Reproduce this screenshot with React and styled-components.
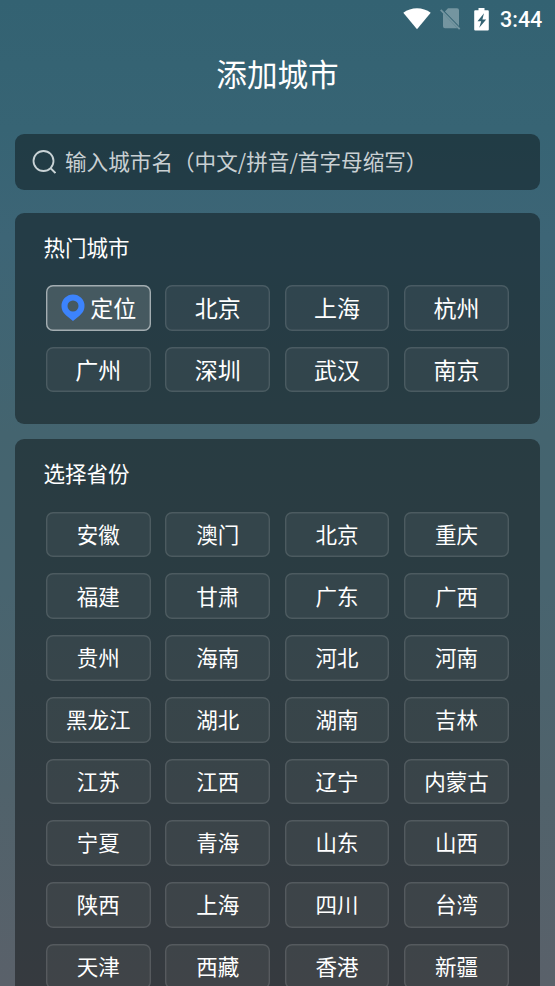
import React from 'react'

import styled, { createGlobalStyle } from 'styled-components'

const GlobalStyle = createGlobalStyle`
    * {
        box-sizing: border-box;
    }

    html, body {
        margin: 0;
        height: 100%;
        overflow: hidden;
    }

    body {
        font-family: "Noto Sans CJK SC", "Noto Sans", sans-serif;
        color: #fff;
    }
`

const Screen = styled.div`
    height: 986px;
    overflow: hidden;
    padding: 0 15px;
    background: linear-gradient(180deg, #336272 0%, #376474 13%, #3d6576 24%, #44646f 44%, #48646f 60%, #50626b 80%, #5a616a 100%);
`

const StatusBar = styled.header`
    display: flex;
    align-items: center;
    justify-content: flex-end;
    height: 38px;
    margin-right: -3px;
`

const WifiIcon = styled.svg`
    width: 28px;
    height: 22px;
    margin-right: 9px;
`

const SimIcon = styled.svg`
    width: 21px;
    height: 22px;
    margin-right: 13px;
`

const BatteryIcon = styled.svg`
    width: 15px;
    height: 23px;
    margin-right: 11px;
`

const Clock = styled.span`
    width: 43px;
    padding-top: 1px;
    font-family: Roboto, sans-serif;
    font-size: 21.5px;
    font-weight: 500;
    line-height: 38px;
    white-space: nowrap;
`

const Title = styled.h1`
    margin: 13px 0 38px;
    font-size: 30.6px;
    font-weight: 400;
    line-height: 45px;
    text-align: center;
`

const SearchBox = styled.div`
    display: flex;
    align-items: center;
    height: 55.5px;
    margin-bottom: 23px;
    padding: 0 0 1.5px 17px;
    border-radius: 9px;
    background: rgba(0, 0, 0, .4);
    color: #c9d0d3;
    font-size: 21.6px;
    line-height: 32px;
    white-space: nowrap;

    svg {
        width: 24px;
        height: 24px;
        margin: 2px 9px 0 0;
    }
`

const Panel = styled.section`
    height: ${props => props.$height};
    margin-bottom: 15px;
    padding: 18.5px 31px 0;
    border-radius: 9px;
    background: rgba(0, 0, 0, .4);
`

const PanelTitle = styled.h2`
    margin: 0 0 22px -2.5px;
    font-size: 21.5px;
    font-weight: 400;
    line-height: 32px;
`

const Grid = styled.div`
    display: grid;
    grid-template-columns: repeat(4, 104.7px);
    grid-auto-rows: 45.7px;
    gap: 16px 14.7px;
    font-size: ${props => props.$size};
`

const ProvinceGrid = styled(Grid)`
    margin-top: 22.5px;
`

const City = styled.button`
    display: flex;
    align-items: center;
    justify-content: center;
    padding: 0 0 1.2px;
    border: none;
    border-radius: 7px;
    background: rgba(255, 255, 255, ${props => props.$active ? .15 : .05});
    box-shadow: inset 0 0 0 1.4px ${props => props.$active ? '#a3adb1' : 'rgba(255, 255, 255, .12)'};
    color: #fff;
    font: inherit;
    line-height: 34px;
    white-space: nowrap;

    svg {
        width: 24px;
        height: 27px;
        margin: 0 5px 0 1px;
    }
`

const hotCities = ['定位', '北京', '上海', '杭州', '广州', '深圳', '武汉', '南京']

const provinces = [
    '安徽', '澳门', '北京', '重庆',
    '福建', '甘肃', '广东', '广西',
    '贵州', '海南', '河北', '河南',
    '黑龙江', '湖北', '湖南', '吉林',
    '江苏', '江西', '辽宁', '内蒙古',
    '宁夏', '青海', '山东', '山西',
    '陕西', '上海', '四川', '台湾',
    '天津', '西藏', '香港', '新疆'
]

const Pin = () => (
    <svg viewBox="0 0 24 27">
        <path fill="#3c83fc" fillRule="evenodd" d="M12 .5A11.5 11.5 0 0 0 .5 12c0 4.5 2.3 7.4 5 9.7L12 27l6.5-5.3c2.7-2.3 5-5.2 5-9.7A11.5 11.5 0 0 0 12 .5Zm0 6a5.5 5.5 0 1 1 0 11 5.5 5.5 0 0 1 0-11Z" />
    </svg>
)

const Status = () => (
    <StatusBar>
        <WifiIcon viewBox="0 0 28 22">
            <path fill="#fff" d="M.3 4.8C8-1.2 20-1.2 27.7 4.8L14 21.3Z" />
        </WifiIcon>
        <SimIcon viewBox="0 0 21 22">
            <path fill="#7495a0" d="M8 .2h9a2 2 0 0 1 2 2v15.9L4.9 3.6ZM3 5.3 17.5 20.2H5a2 2 0 0 1-2-2Z" />
            <path stroke="#7495a0" strokeWidth="1.8" d="m.7 1.8 19 19.4" />
        </SimIcon>
        <BatteryIcon viewBox="0 0 15 23">
            <path fill="#fff" fillRule="evenodd" d="M4.5 0h6v2.2h3.3q1 0 1 1v18.3q0 1-1 1H1.2q-1 0-1-1V3.2q0-1 1-1h3.3ZM10 5.2l-6.5 8h3.7l-2 6.5 7-8.3H8.4Z" />
        </BatteryIcon>
        <Clock>3:44</Clock>
    </StatusBar>
)

const App = () => {
    return (
        <Screen>
            <GlobalStyle />
            <Status />
            <Title>添加城市</Title>
            <SearchBox>
                <svg viewBox="0 0 24 24" fill="none" stroke="#c9d3d6" strokeWidth="1.8">
                    <circle cx="11.5" cy="11" r="10" />
                    <path d="m18.4 18 5 5" />
                </svg>
                输入城市名（中文/拼音/首字母缩写）
            </SearchBox>
            <Panel $height="211.3px">
                <PanelTitle>热门城市</PanelTitle>
                <Grid $size="23px">
                    {hotCities.map((city, index) => (
                        <City key={city} $active={index === 0}>
                            {index === 0 && <Pin />}
                            {city}
                        </City>
                    ))}
                </Grid>
            </Panel>
            <Panel $height="580px">
                <PanelTitle>选择省份</PanelTitle>
                <ProvinceGrid $size="21.5px">
                    {provinces.map(city => <City key={city}>{city}</City>)}
                </ProvinceGrid>
            </Panel>
        </Screen>
    )
}

export default App
